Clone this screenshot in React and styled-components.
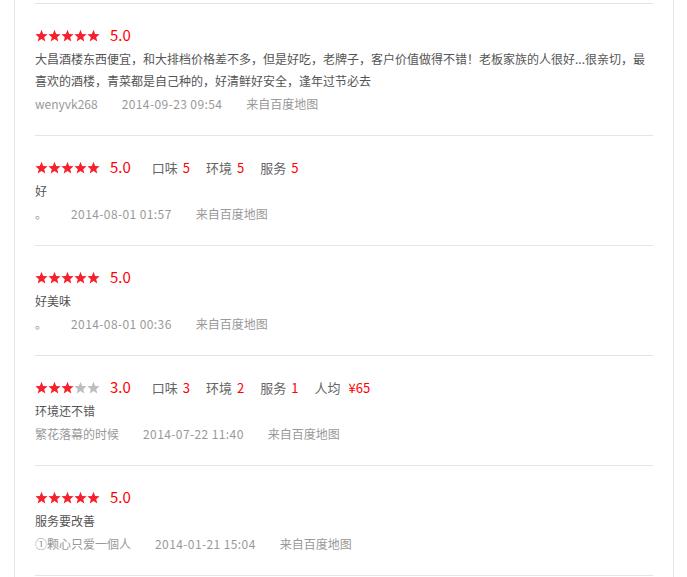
import React from "react";
import styled, { createGlobalStyle } from "styled-components";

const Global = createGlobalStyle`
  html, body { margin: 0; padding: 0; background: #fff; }
  body { font-family: "Noto Sans CJK SC", "Noto Sans", sans-serif; font-size: 12px; color: #555; }
`;

const Page = styled.div`
  margin-left: 14px;
  width: 660px;
  border-left: 1px solid #e6e6e6;
  border-right: 1px solid #e6e6e6;
  padding: 3px 20px 0 20px;
  min-height: 577px;
  box-sizing: border-box;
`;

const List = styled.ul`
  list-style: none;
  margin: 0;
  padding: 0;
`;

const Item = styled.li`
  border-top: 1px solid #e5e5e5;
  padding: 19px 0 20px;
  &:last-child { border-bottom: 1px solid #e5e5e5; }
`;

const RatingRow = styled.div`
  display: flex;
  align-items: center;
  height: 25px;
`;

const Stars = styled.span`
  display: inline-flex;
  margin-right: 10px;
`;

const Score = styled.span`
  color: #f00;
  font-size: 15px;
  margin-right: 21px;
  position: relative;
  top: -1px;
`;

const Detail = styled.span`
  color: #666;
  font-size: 13px;
  margin-right: 16px;
  b {
    font-weight: normal;
    color: #f00;
    margin-left: ${(p) => (p.$price ? "8px" : "5px")};
  }
`;

const Content = styled.p`
  margin: 0;
  line-height: 22px;
  color: #555;
  font-size: 12px;
  max-width: 614px;
`;

const Meta = styled.div`
  display: flex;
  line-height: 23px;
  color: #999;
  font-size: 12px;
`;

const MetaText = styled.span`
  margin-right: 24px;
  letter-spacing: ${(p) => (p.$wide ? "0.4px" : "0")};
`;

const Star = ({ on }) => (
  <svg width="13" height="13" viewBox="0 0 24 24">
    <path
      d="M12 1.5l3.1 7.6 8.2.6-6.3 5.3 2 8-7-4.4-7 4.4 2-8L.7 9.7l8.2-.6z"
      fill={on ? "#f5222d" : "#bdbdbd"}
    />
  </svg>
);

const reviews = [
  {
    stars: 5,
    score: "5.0",
    details: [],
    text: "大昌酒楼东西便宜，和大排档价格差不多，但是好吃，老牌子，客户价值做得不错！老板家族的人很好...很亲切，最喜欢的酒楼，青菜都是自己种的，好清鲜好安全，逢年过节必去",
    user: "wenyvk268",
    date: "2014-09-23 09:54",
  },
  {
    stars: 5,
    score: "5.0",
    details: [["口味", "5"], ["环境", "5"], ["服务", "5"]],
    text: "好",
    user: "。",
    date: "2014-08-01 01:57",
  },
  {
    stars: 5,
    score: "5.0",
    details: [],
    text: "好美味",
    user: "。",
    date: "2014-08-01 00:36",
  },
  {
    stars: 3,
    score: "3.0",
    details: [["口味", "3"], ["环境", "2"], ["服务", "1"], ["人均", "¥65"]],
    text: "环境还不错",
    user: "繁花落幕的时候",
    date: "2014-07-22 11:40",
  },
  {
    stars: 5,
    score: "5.0",
    details: [],
    text: "服务要改善",
    user: "①颗心只爱一個人",
    date: "2014-01-21 15:04",
  },
];

export default function App() {
  return (
    <>
      <Global />
      <Page>
        <List>
          {reviews.map((r, i) => (
            <Item key={i}>
              <RatingRow>
                <Stars>
                  {[0, 1, 2, 3, 4].map((k) => (
                    <Star key={k} on={k < r.stars} />
                  ))}
                </Stars>
                <Score>{r.score}</Score>
                {r.details.map(([l, v]) => (
                  <Detail key={l} $price={l === "人均"}>
                    {l}
                    <b>{v}</b>
                  </Detail>
                ))}
              </RatingRow>
              <Content>{r.text}</Content>
              <Meta>
                <MetaText>{r.user}</MetaText>
                <MetaText $wide>{r.date}</MetaText>
                <MetaText>来自百度地图</MetaText>
              </Meta>
            </Item>
          ))}
        </List>
      </Page>
    </>
  );
}
